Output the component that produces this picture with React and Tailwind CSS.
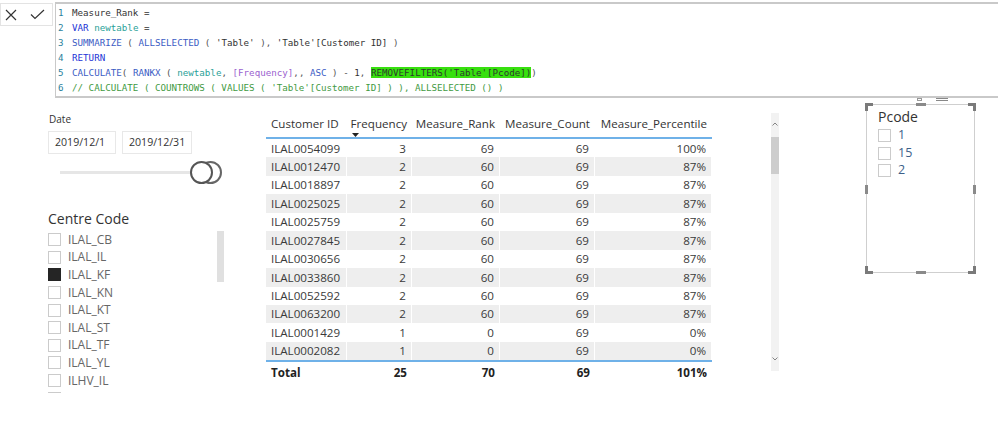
import React from 'react';

const KW = 'text-[#2435d6]';
const FN = 'text-[#3b5cc4]';
const VAR = 'text-[#2aa198]';
const DARK = 'text-[#333]';
const PUNC = 'text-[#555]';
const PURPLE = 'text-[#9b5fcf]';
const COMMENT = 'text-[#3f9a3f]';

const CODE = [
  [['Measure_Rank =', DARK]],
  [['VAR', KW], [' ', DARK], ['newtable', VAR], [' =', DARK]],
  [['SUMMARIZE', FN], [' ( ', PUNC], ['ALLSELECTED', FN], [' ( ', PUNC], ["'Table'", DARK], [' ), ', PUNC], ["'Table'[Customer ID]", DARK], [' )', PUNC]],
  [['RETURN', KW]],
  [['CALCULATE', FN], ['( ', PUNC], ['RANKX', FN], [' ( ', PUNC], ['newtable', VAR], [', ', PUNC], ['[Frequency]', PURPLE], [',, ', PUNC], ['ASC', FN], [' ) - ', PUNC], ['1', DARK], [', ', PUNC], ["REMOVEFILTERS('Table'[Pcode])", 'text-[#2c3a2c] bg-[#37e00e]'], [')', PUNC]],
  [["// CALCULATE ( COUNTROWS ( VALUES ( 'Table'[Customer ID] ) ), ALLSELECTED () )", COMMENT]],
];

const ROWS = [
  ['ILAL0054099', 3, 69, 69, '100%'],
  ['ILAL0012470', 2, 60, 69, '87%'],
  ['ILAL0018897', 2, 60, 69, '87%'],
  ['ILAL0025025', 2, 60, 69, '87%'],
  ['ILAL0025759', 2, 60, 69, '87%'],
  ['ILAL0027845', 2, 60, 69, '87%'],
  ['ILAL0030656', 2, 60, 69, '87%'],
  ['ILAL0033860', 2, 60, 69, '87%'],
  ['ILAL0052592', 2, 60, 69, '87%'],
  ['ILAL0063200', 2, 60, 69, '87%'],
  ['ILAL0001429', 1, 0, 69, '0%'],
  ['ILAL0002082', 1, 0, 69, '0%'],
];

const CENTRES = ['ILAL_CB', 'ILAL_IL', 'ILAL_KF', 'ILAL_KN', 'ILAL_KT', 'ILAL_ST', 'ILAL_TF', 'ILAL_YL', 'ILHV_IL'];

const COLS = ['w-[81px]', 'w-[65px]', 'w-[88px]', 'w-[95px]', 'w-[117px]'];

function Corner({ className }) {
  return <div className={`absolute w-[8px] h-[8px] border-[#7a7a7a] ${className}`} />;
}

export default function App() {
  return (
    <div className="w-[998px] h-[423px] bg-white overflow-hidden font-['Open_Sans',sans-serif] text-[#333]">
      {/* formula bar */}
      <div className="flex h-[98px]">
        <div className="mt-[3px] w-[53px] h-[23px] border border-[#e3e3e3] flex items-center gap-[13px] pl-[3px]">
          <svg width="12" height="12" viewBox="0 0 12 12" className="ml-[1px]">
            <path d="M1 1 L11 11 M11 1 L1 11" stroke="#333" strokeWidth="1.2" fill="none" />
          </svg>
          <svg width="15" height="11" viewBox="0 0 15 11">
            <path d="M1 5.5 L5 9.5 L14 1" stroke="#333" strokeWidth="1.2" fill="none" />
          </svg>
        </div>
        <div className="ml-[2px] mt-[2px] flex-1 h-[96px] border-t-2 border-b-2 border-l border-[#c9c9c9] pt-[1px] pl-[2px] font-['DejaVu_Sans_Mono',monospace] text-[9.2px] leading-[15px]">
          {CODE.map((line, i) => (
            <div key={i} className="flex whitespace-pre h-[15px]">
              <span className="w-[14px] text-[#2b7f9c]">{i + 1}</span>
              <span>
                {line.map(([t, c], j) => (
                  <span key={j} className={c}>{t}</span>
                ))}
              </span>
            </div>
          ))}
        </div>
      </div>

      <div className="flex">
        {/* left slicers */}
        <div className="w-[266px] pl-[48px]">
          <div className="pt-[14px] text-[10px] leading-[14px] pl-[1px] text-[#333]">Date</div>
          <div className="mt-[5px] flex gap-[6px]">
            <div className="w-[68px] h-[23px] border border-[#e8e8e8] flex items-center pl-[6px] text-[10.6px] text-[#333]">2019/12/1</div>
            <div className="w-[70px] h-[23px] border border-[#e8e8e8] flex items-center pl-[6px] text-[10.6px] text-[#333]">2019/12/31</div>
          </div>
          <div className="mt-[7px] h-[23px] flex items-center pl-[12px]">
            <div className="w-[132px] h-[3px] bg-[#e6e6e6]" />
            <div className="relative w-[34px] h-[23px] -ml-[2px]">
              <div className="absolute left-[9px] top-0 w-[23px] h-[23px] rounded-full border-2 border-[#666] bg-white" />
              <div className="absolute left-0 top-0 w-[23px] h-[23px] rounded-full border-2 border-[#555] bg-white" />
            </div>
          </div>
          <div className="mt-[26px] text-[14px] leading-[18px] text-[#333]">Centre Code</div>
          <div className="mt-[3px] flex h-[162px] overflow-hidden">
            <div className="w-[169px]">
              {CENTRES.map((c, i) => (
                <div key={c} className="h-[17.6px] flex items-center">
                  <div className={`w-[13px] h-[13px] border ${i === 2 ? 'bg-[#252525] border-[#252525]' : 'border-[#cbcbcb]'}`} />
                  <span className="ml-[7px] text-[12px] text-[#666]">{c}</span>
                </div>
              ))}
              <div className="h-[17.6px] flex items-center">
                <div className="w-[13px] h-[13px] border border-[#cbcbcb]" />
              </div>
            </div>
            <div className="w-[7px] h-[53px] bg-[#e0e0e0] -mt-[2px]" />
          </div>
        </div>

        {/* table */}
        <div className="w-[446px] mt-[16px] text-[11.6px]">
          <div className="flex h-[25px] border-b-2 border-[#6fb1e8]">
            {['Customer ID', 'Frequency', 'Measure_Rank', 'Measure_Count', 'Measure_Percentile'].map((h, i) => (
              <div key={h} className={`${COLS[i]} relative pt-[2px] leading-[16px] whitespace-nowrap ${i === 0 ? 'pl-[5px]' : 'text-right pr-[5px]'} text-[#333]`}>
                {h}
                {i === 1 && (
                  <svg width="7" height="4" viewBox="0 0 7 4" className="absolute left-[5px] top-[19px]">
                    <path d="M0 0 L7 0 L3.5 4 Z" fill="#222" />
                  </svg>
                )}
              </div>
            ))}
          </div>
          {ROWS.map((r, i) => (
            <div key={r[0]} className={`flex h-[18.45px] items-center ${i % 2 ? 'bg-[#eeeeee]' : 'bg-white'}`}>
              {r.map((v, j) => (
                <div key={j} className={`${COLS[j]} h-full flex items-center border-r border-white ${j === 0 ? 'pl-[5px]' : 'justify-end pr-[5px]'} text-[#3a3a3a]`}>
                  {v}
                </div>
              ))}
            </div>
          ))}
          <div className="flex h-[21px] items-center border-t-2 border-[#6fb1e8] font-bold text-[#222] pt-[2px]">
            {['Total', 25, 70, 69, '101%'].map((v, j) => (
              <div key={j} className={`${COLS[j]} ${j === 0 ? 'pl-[5px]' : 'text-right pr-[5px]'}`}>{v}</div>
            ))}
          </div>
        </div>

        {/* table scrollbar */}
        <div className="ml-[59px] mt-[15px] w-[8px] h-[258px] bg-[#f2f2f2] flex flex-col items-center">
          <svg width="6" height="4" viewBox="0 0 6 4" className="mt-[9px]">
            <path d="M0.5 3.5 L3 1 L5.5 3.5" stroke="#777" strokeWidth="0.9" fill="none" />
          </svg>
          <div className="mt-[11px] w-[8px] h-[37px] bg-[#cdcdcd]" />
          <div className="flex-1" />
          <svg width="6" height="4" viewBox="0 0 6 4" className="mb-[10px]">
            <path d="M0.5 0.5 L3 3 L5.5 0.5" stroke="#777" strokeWidth="0.9" fill="none" />
          </svg>
        </div>

        {/* Pcode slicer */}
        <div className="relative ml-[87px] mt-[6px] w-[109px] h-[169px] border border-[#cfcfcf] pl-[11px] pt-[3px]">
          <div className="absolute left-[50px] -top-[7px] w-[5px] h-[3px] border border-[#999] bg-white" />
          <div className="absolute left-[69px] -top-[7px] w-[12px] h-[3px] border-t border-b border-[#888]" />
          <Corner className="-left-[2px] -top-[2px] border-l-[3px] border-t-[3px]" />
          <Corner className="-right-[2px] -top-[2px] border-r-[3px] border-t-[3px]" />
          <Corner className="-left-[2px] -bottom-[2px] border-l-[3px] border-b-[3px]" />
          <Corner className="-right-[2px] -bottom-[2px] border-r-[3px] border-b-[3px]" />
          <div className="absolute -left-[2px] top-[80px] w-[3px] h-[9px] bg-[#8a8a8a]" />
          <div className="absolute -right-[2px] top-[80px] w-[3px] h-[9px] bg-[#8a8a8a]" />
          <div className="absolute left-[49px] -top-[2px] w-[10px] h-[3px] bg-[#8a8a8a]" />
          <div className="absolute left-[49px] -bottom-[2px] w-[10px] h-[3px] bg-[#8a8a8a]" />
          <div className="text-[14px] leading-[18px] text-[#333]">Pcode</div>
          <div className="mt-[1px]">
            {['1', '15', '2'].map((p) => (
              <div key={p} className="h-[17.5px] flex items-center">
                <div className="w-[13px] h-[13px] border border-[#cbcbcb]" />
                <span className="ml-[7px] text-[12.5px] text-[#3d6089]">{p}</span>
              </div>
            ))}
          </div>
        </div>
      </div>
    </div>
  );
}
